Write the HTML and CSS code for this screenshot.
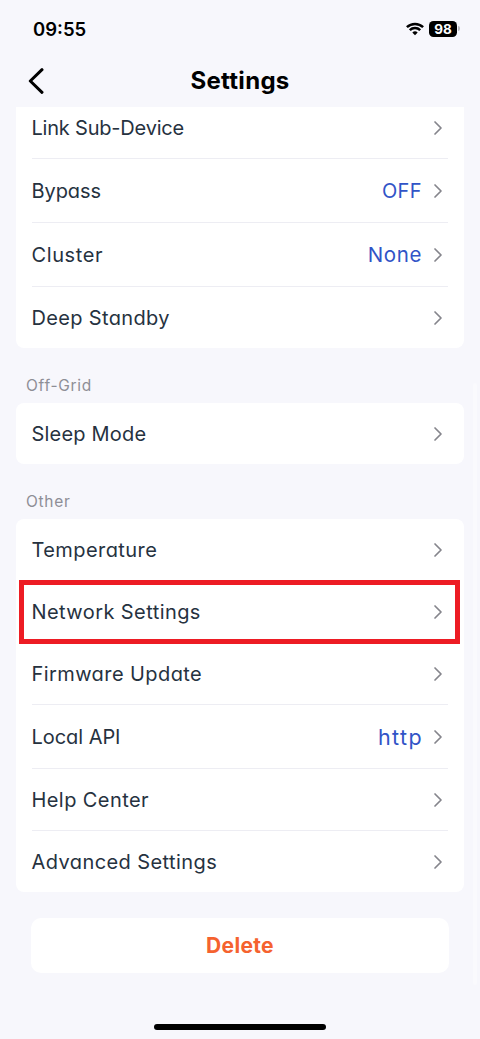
FILE: index.html
```html
<!DOCTYPE html>
<html lang="en">
<head>
<meta charset="utf-8">
<meta name="viewport" content="width=device-width, initial-scale=1">
<title>Settings</title>
<link rel="stylesheet" href="styles.css">
</head>
<body>
<svg class="defs" width="0" height="0" aria-hidden="true">
  <symbol id="chevron" viewBox="0 0 10 16"><path d="M2 2 L8 8 L2 14" fill="none" stroke="#85858c" stroke-width="1.7" stroke-linecap="round" stroke-linejoin="round"/></symbol>
</svg>
<div class="screen">
  <header class="status">
    <span class="time">09:55</span>
    <div class="indicators">
      <svg class="wifi" width="18" height="14" viewBox="0 0 18 14" fill="none" stroke="#000" stroke-width="2.5">
        <path d="M.9 5.2 A11.7 11.7 0 0 1 17.1 5.2"/>
        <path d="M3.8 8.1 A7.5 7.5 0 0 1 14.2 8.1"/>
        <path d="M9 13.3 L6.3 10.6 A3.9 3.9 0 0 1 11.7 10.6 Z" fill="#000" stroke="none"/>
      </svg>
      <span class="battery">98</span><span class="battery-tip"></span>
    </div>
  </header>
  <nav class="titlebar">
    <svg class="back" width="16" height="26" viewBox="0 0 16 26"><path d="M14 1.7 L2.3 13 L14 24.3" fill="none" stroke="#000" stroke-width="3" stroke-linecap="round" stroke-linejoin="round"/></svg>
    <h1 class="title">Settings</h1>
  </nav>
  <main class="content">
    <section class="card card-top">
      <div class="row row-cut"><span class="name link">Link Sub-Device</span><svg class="chev"><use href="#chevron"/></svg></div>
      <div class="row tall"><span class="name bypass">Bypass</span><span class="value off">OFF</span><svg class="chev"><use href="#chevron"/></svg></div>
      <div class="row tall"><span class="name cluster">Cluster</span><span class="value none">None</span><svg class="chev"><use href="#chevron"/></svg></div>
      <div class="row last"><span class="name deep">Deep Standby</span><svg class="chev"><use href="#chevron"/></svg></div>
    </section>
    <h2 class="label offgrid">Off-Grid</h2>
    <section class="card">
      <div class="row last"><span class="name sleep">Sleep Mode</span><svg class="chev"><use href="#chevron"/></svg></div>
    </section>
    <h2 class="label other">Other</h2>
    <section class="card">
      <div class="row"><span class="name temperature">Temperature</span><svg class="chev"><use href="#chevron"/></svg></div>
      <div class="row marked"><span class="name network">Network Settings</span><svg class="chev"><use href="#chevron"/></svg><span class="highlight"></span></div>
      <div class="row"><span class="name firmware">Firmware Update</span><svg class="chev"><use href="#chevron"/></svg></div>
      <div class="row tall"><span class="name api">Local API</span><span class="value http">http</span><svg class="chev"><use href="#chevron"/></svg></div>
      <div class="row"><span class="name help">Help Center</span><svg class="chev"><use href="#chevron"/></svg></div>
      <div class="row last"><span class="name advanced">Advanced Settings</span><svg class="chev"><use href="#chevron"/></svg></div>
    </section>
    <button class="delete">Delete</button>
  </main>
  <div class="home"></div>
  <div class="scrollbar"></div>
</div>
</body>
</html>
```
FILE: styles.css
```css
* { box-sizing: border-box; }
body { margin: 0; background: #f7f7fc; font-family: Inter, "Liberation Sans", sans-serif; font-feature-settings: "cv11" 1; color: #26323f; }
.defs { display: block; height: 0; }
.screen { position: relative; width: 480px; height: 1039px; overflow: hidden; display: flex; flex-direction: column; }
.status { height: 56px; padding: 0 21px 0 33px; display: flex; align-items: center; justify-content: space-between; color: #000; }
.time { font-size: 18.5px; font-weight: 600; line-height: 24px; padding-top: 2px; }
.indicators { display: flex; align-items: center; padding-top: 1px; }
.wifi { margin-right: 5px; }
.battery { width: 28px; height: 16px; border-radius: 4.5px; background: #000; color: #fff; font-size: 13.5px; font-weight: 700; line-height: 16px; text-align: center; }
.battery-tip { width: 1.5px; height: 5px; margin-left: 1px; background: #bbbbc0; border-radius: 0 2px 2px 0; margin-right: -.5px; }
.titlebar { height: 51px; padding-bottom: 2px; display: grid; grid-template-columns: 100px 1fr 100px; align-items: center; }
.back { margin-left: 28px; }
.title { margin: 0; text-align: center; font-size: 24px; line-height: 30px; font-weight: 700; letter-spacing: .3px; color: #000; }
.content { padding: 0 16px; }
.card { background: #fff; border-radius: 8px; padding: 0 16px; }
.card-top { border-radius: 0 0 8px 8px; }
.row { position: relative; height: 62px; display: flex; align-items: center; border-bottom: 1px solid #ededf3; }
.row-cut { height: 52px; padding-bottom: 9px; }
.tall { height: 64px; }
.last { height: 61px; border-bottom: 0; }
.name { margin-left: -.5px; margin-right: auto; font-size: 20px; font-weight: 380; line-height: 28px; white-space: nowrap; letter-spacing: .42px; }
.link { letter-spacing: -.2px; }
.bypass { letter-spacing: -.1px; }
.cluster { letter-spacing: .6px; }
.deep { letter-spacing: .35px; }
.sleep { letter-spacing: .2px; }
.api { letter-spacing: -.05px; }
.value { font-size: 20px; font-weight: 380; line-height: 28px; color: #3154c7; margin-right: 11px; }
.off { letter-spacing: .4px; }
.none { font-size: 20.5px; letter-spacing: .6px; }
.http { font-size: 21.5px; letter-spacing: 1.4px; margin-right: 10px; }
.chev { width: 10px; height: 16px; margin-right: 5px; }
.label { margin: 0; height: 55px; padding: 28px 10px 7px; font-size: 15.5px; line-height: 20px; font-weight: 380; letter-spacing: .7px; color: #8e8e96; }
.highlight { position: absolute; left: -13px; top: -1px; width: 441px; height: 64px; border: 5px solid #ed1c24; }
.delete { display: block; width: 418px; height: 55px; margin: 26px 0 0 15px; padding: 0; border: 0; border-radius: 10px; background: #fff; color: #f5622f; font: 700 21px/28px Inter, sans-serif; letter-spacing: .35px; }
.home { width: 172px; height: 6px; margin: auto auto 9.5px; border-radius: 3px; background: #000; }
.scrollbar { position: absolute; left: 473px; top: 383px; width: 4px; height: 602px; border-radius: 2px; background: #fafafd; }
```
